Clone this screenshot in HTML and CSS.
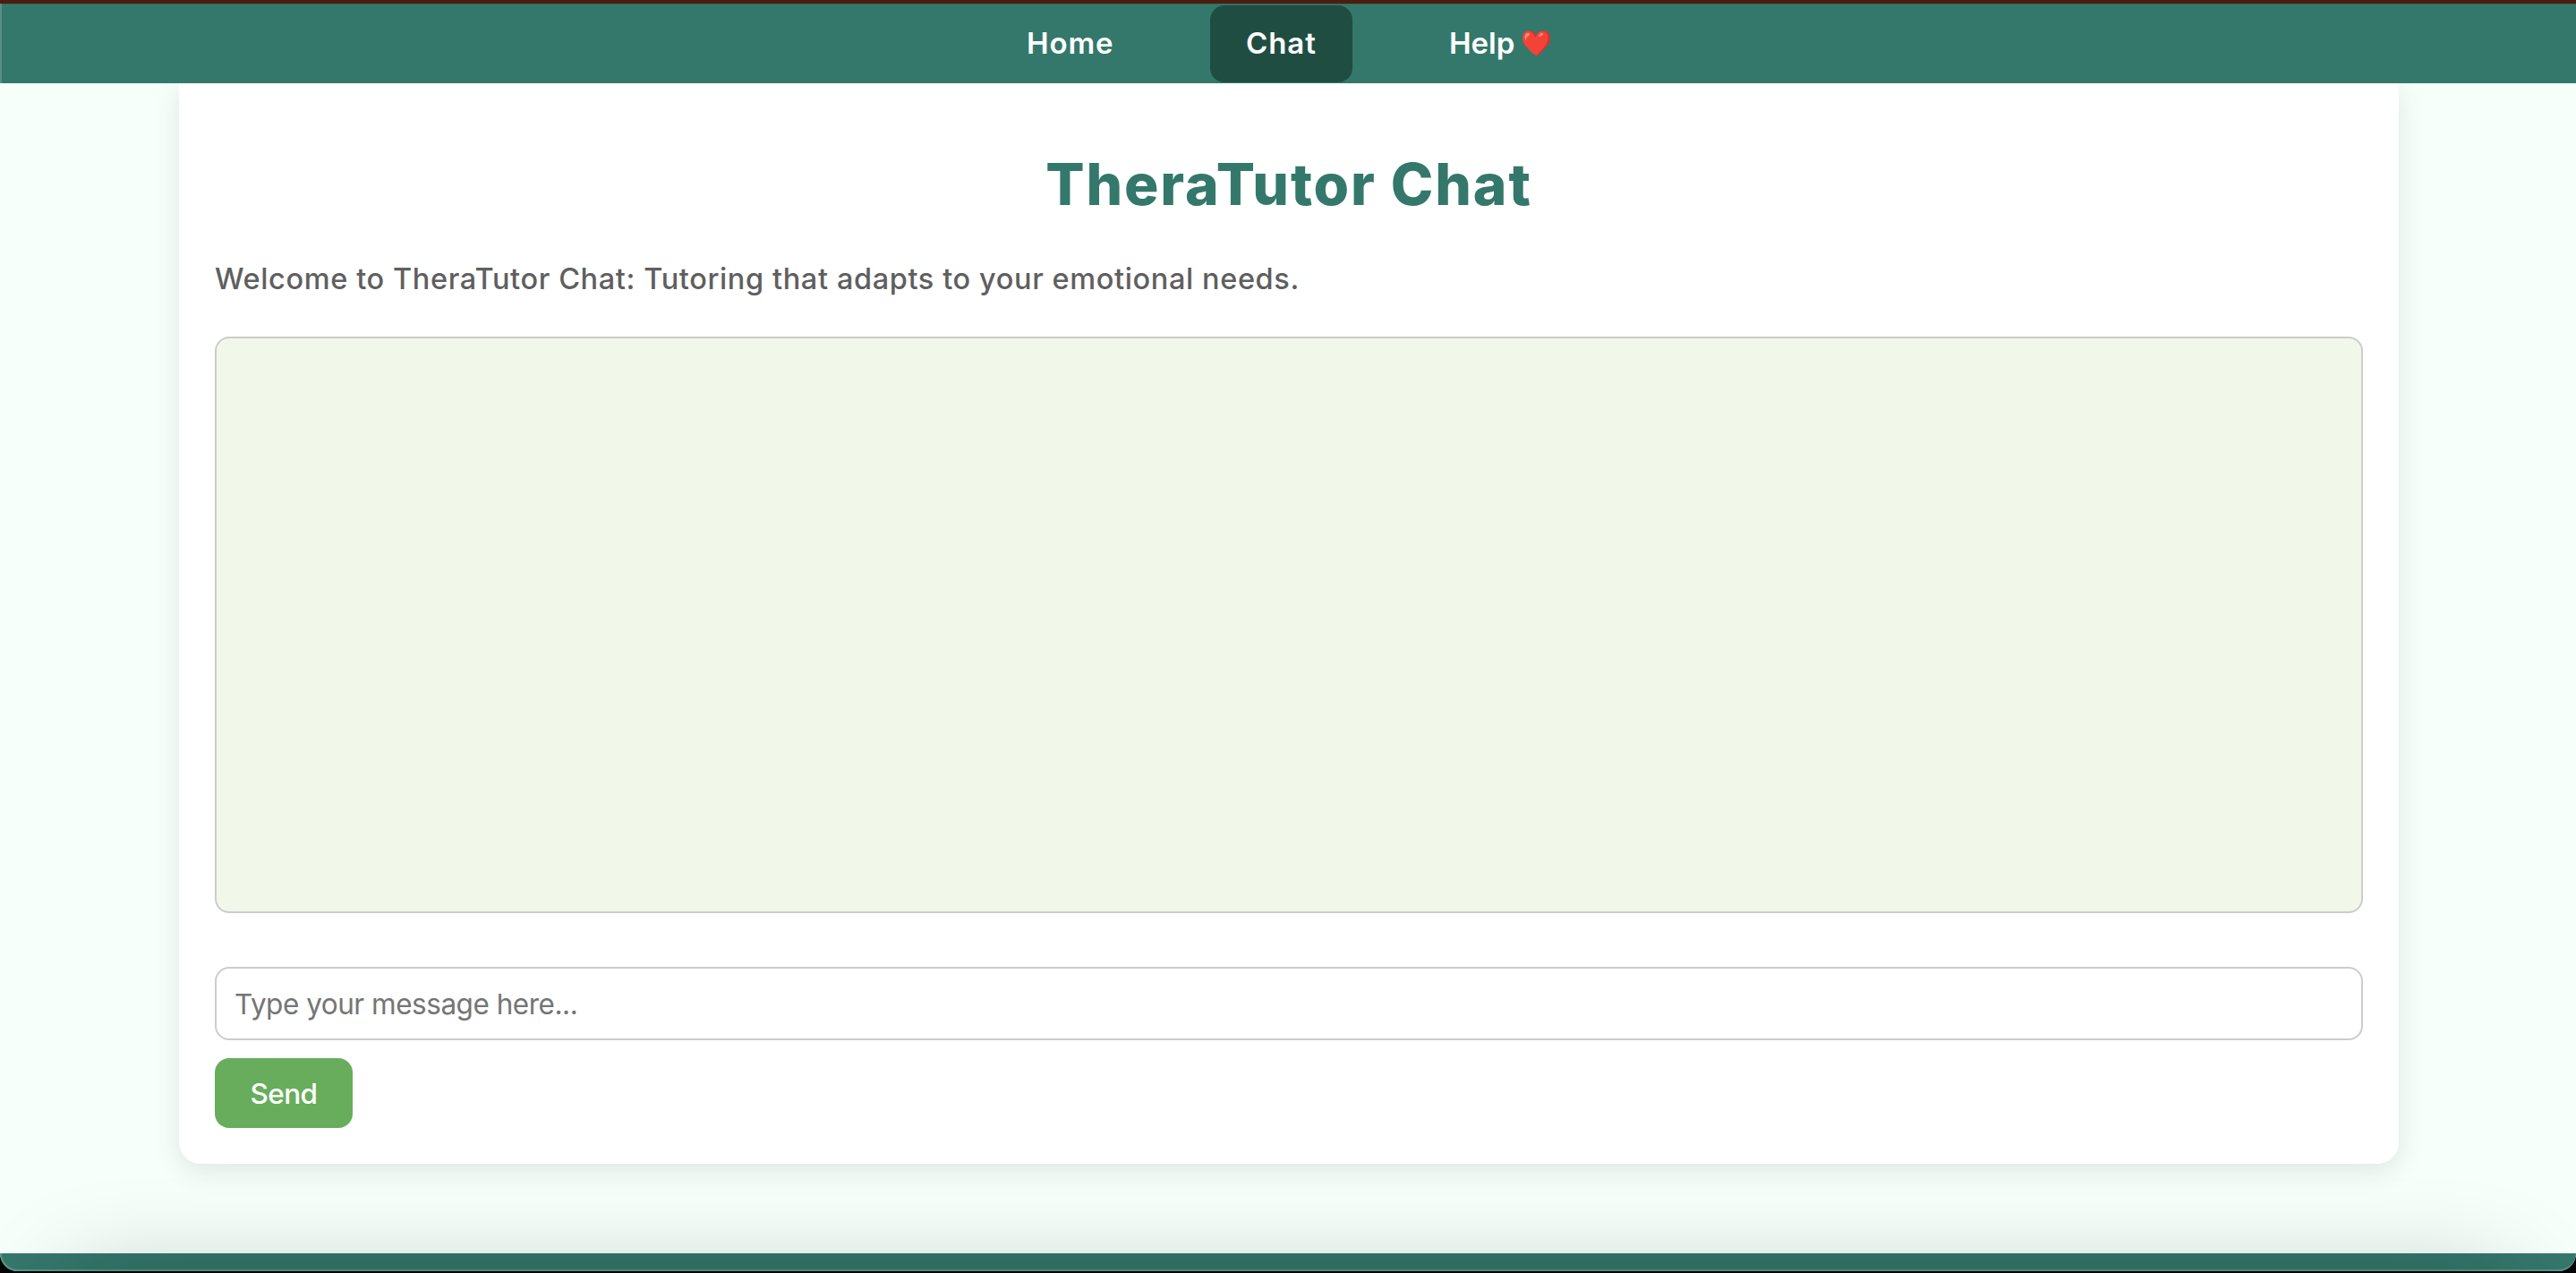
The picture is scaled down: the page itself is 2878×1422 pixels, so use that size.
FILE: index.html
```
<!DOCTYPE html>
<html lang="en">
<head>
<meta charset="utf-8">
<title>TheraTutor Chat</title>
<link rel="stylesheet" href="styles.css">
</head>
<body>
<div class="window">
  <nav class="nav">
    <a class="nav-link home">Home</a>
    <a class="nav-link active">Chat</a>
    <a class="nav-link help">Help <span class="heart">❤️</span></a>
  </nav>
  <main class="page">
    <section class="card">
      <h1 class="title">TheraTutor Chat</h1>
      <p class="intro">Welcome to TheraTutor Chat: Tutoring that adapts to your emotional needs.</p>
      <div class="chat-box"></div>
      <input class="message" type="text" placeholder="Type your message here...">
      <button class="send">Send</button>
    </section>
  </main>
  <footer class="footer"></footer>
  <div class="shade"></div>
  <div class="rim"></div>
</div>
</body>
</html>
```
FILE: styles.css
```
* { box-sizing: border-box; }

body {
  margin: 0;
  background: #050305;
  font-family: Inter, sans-serif;
  overflow: hidden;
}

.window {
  position: relative;
  display: flex;
  flex-direction: column;
  height: 1420px;
  background: #f6fffa;
  border-radius: 0 0 20px 20px;
  overflow: hidden;
}

.nav {
  position: relative;
  z-index: 1;
  display: flex;
  justify-content: center;
  gap: 67px;
  flex: none;
  height: 93px;
  padding-top: 2px;
  background: #34786b;
  border-top: 4px solid #4c1d0f;
  box-shadow: inset 0 1px 0 #2d6b5f;
}

.nav-link {
  width: 159px;
  height: 86px;
  padding: 0 0 0 40px;
  border-radius: 16px;
  color: #fff;
  font-size: 33px;
  font-weight: 600;
  line-height: 84px;
  letter-spacing: 0.9px;
  white-space: nowrap;
}

.nav-link.home { width: 179px; padding-left: 41px; }

.nav-link.active { background: #1f4d42; }

.nav-link.help { width: 194px; padding-left: 41px; letter-spacing: 0; }

.heart {
  display: inline-block;
  margin-left: -2px;
  font-size: 28px;
  line-height: 1;
  vertical-align: 2px;
}

.page {
  flex: 1;
  min-height: 0;
  padding: 0 198px 100px 200px;
}

.card {
  display: flex;
  flex-direction: column;
  align-items: flex-start;
  height: 1207px;
  padding: 0 40px;
  background: #fff;
  border-radius: 0 0 24px 24px;
  box-shadow: 0 8px 30px rgba(0, 0, 0, 0.1);
}

.title {
  align-self: center;
  margin: 65px 0 0;
  color: #34786b;
  font-size: 64px;
  font-weight: 800;
  line-height: 96px;
  letter-spacing: 1.9px;
}

.intro {
  margin: 33px 0 0;
  color: #5f5f5f;
  font-size: 32.5px;
  font-weight: 450;
  line-height: 50px;
  letter-spacing: 0.61px;
}

.chat-box {
  width: 100%;
  height: 644px;
  margin-top: 39px;
  background: #f2f8e9;
  border: 2px solid #ccc;
  border-radius: 16px;
}

.message {
  width: 100%;
  height: 82px;
  margin: 60px 0 0;
  padding: 0 20px;
  background: #fff;
  border: 2px solid #ccc;
  border-radius: 16px;
  font: 400 31.5px Inter, sans-serif;
  letter-spacing: -0.48px;
}

.message::placeholder { color: #757575; }

.send {
  width: 154px;
  height: 78px;
  margin: 20px 0 0;
  padding: 0;
  background: #68ad5c;
  border: 0;
  border-radius: 16px;
  color: #fff;
  font: 500 31.5px Inter, sans-serif;
  letter-spacing: -0.6px;
}

.footer {
  flex: none;
  height: 20px;
  background: #34786b;
}

/* Soft shadow rising from below the window */
.shade {
  position: absolute;
  top: 100%;
  left: 80px;
  right: 80px;
  height: 100px;
  box-shadow: 0 10px 110px rgba(0, 0, 0, 0.25);
}

.rim {
  position: absolute;
  inset: 4px 0 0;
  z-index: 2;
  border: solid rgba(255, 255, 255, 0.18);
  border-width: 0 0 2px 2px;
  border-radius: 0 0 20px 20px;
}
```
